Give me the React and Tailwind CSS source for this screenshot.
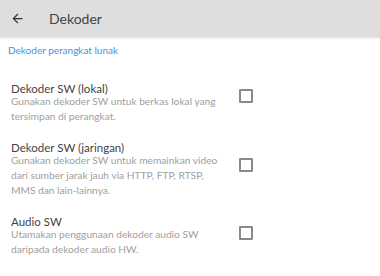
import React from "react";

const items = [
  {
    title: "Dekoder SW (lokal)",
    lines: ["Gunakan dekoder SW untuk berkas lokal yang", "tersimpan di perangkat."],
    box: "mt-[6px]",
  },
  {
    title: "Dekoder SW (jaringan)",
    lines: [
      "Gunakan dekoder SW untuk memainkan video",
      "dari sumber jarak jauh via HTTP, FTP, RTSP,",
      "MMS dan lain-lainnya.",
    ],
    box: "mt-[16px]",
  },
  {
    title: "Audio SW",
    lines: ["Utamakan penggunaan dekoder audio SW", "daripada dekoder audio HW."],
    box: "mt-[10px]",
  },
];

function BackArrow() {
  return (
    <svg width="15" height="15" viewBox="0 0 24 24" className="text-[#333]">
      <path d="M20 11H7.83l5.59-5.59L12 4l-8 8 8 8 1.41-1.41L7.83 13H20v-2z" fill="currentColor" />
    </svg>
  );
}

export default function App() {
  return (
    <div className="w-[380px] h-[276px] overflow-hidden bg-white font-['Lato',sans-serif]">
      <div className="h-[37px] bg-[#dedede] flex items-center shadow-[0_1px_2px_rgba(0,0,0,0.15)] relative">
        <div className="w-[49px] pl-[10px] flex items-center">
          <BackArrow />
        </div>
        <span className="text-[14px] text-[#444] leading-none">Dekoder</span>
      </div>

      <div className="pl-[8px] pt-[6px] pb-[17px] text-[10px] leading-[14px] text-[#4a8fe7]">
        Dekoder perangkat lunak
      </div>

      {items.map((it, i) => (
        <div key={i} className="flex items-start pl-[11px] py-[9px]">
          <div className="w-[228px]">
            <div className="text-[11.5px] leading-[12px] text-[#444]">{it.title}</div>
            <div className="-mt-[1px] text-[10.2px] leading-[15px] text-[#a0a0a0]">
              {it.lines.map((l, j) => (
                <div key={j} className="whitespace-nowrap">{l}</div>
              ))}
            </div>
          </div>
          <div className={`${it.box} w-[14px] h-[14px] border-2 border-[#8a8a8a] rounded-[1px]`} />
        </div>
      ))}
    </div>
  );
}
